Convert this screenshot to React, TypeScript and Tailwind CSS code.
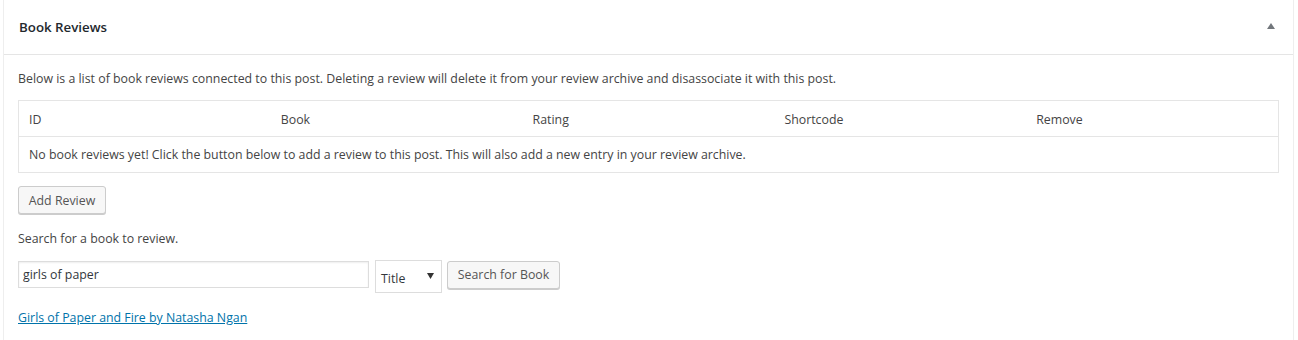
const columns = ["ID", "Book", "Rating", "Shortcode", "Remove"];

export default function App() {
  return (
    <div className="min-h-[340px] bg-white pl-[3px] pr-[4px] font-['Open_Sans',sans-serif] text-[12.35px] text-[#444]">
      <div className="min-h-[340px] border-x border-[#eeeeee]">
        <div className="flex h-[55px] items-center justify-between border-b border-[#e5e5e5] pl-[15px] pr-[18px]">
          <h2 className="pt-[2px] text-[13.3px] font-semibold text-[#23282d]">Book Reviews</h2>
          <svg width="8" height="6" viewBox="0 0 8 6" className="mb-[2px]">
            <polygon points="4,0 8,6 0,6" fill="#72777c" />
          </svg>
        </div>

        <div className="px-[14px]">
          <p className="mt-[13px] h-[20px] pt-[1px] leading-[20px]">
            Below is a list of book reviews connected to this post. Deleting a review will delete it from your review archive and disassociate it with this post.
          </p>

          <div className="mt-[12px] border border-[#e5e5e5]">
            <div className="grid h-[36px] grid-cols-5 items-center border-b border-[#e5e5e5] pt-[3px]">
              {columns.map((col) => (
                <div key={col} className="pl-[10px]">
                  {col}
                </div>
              ))}
            </div>
            <div className="flex h-[35px] items-center pl-[10px] pt-[2px]">
              No book reviews yet! Click the button below to add a review to this post. This will also add a new entry in your review archive.
            </div>
          </div>

          <button className="mt-[13px] h-[28px] w-[88px] rounded-[3px] border border-[#cccccc] bg-[#f7f7f7] pt-[2px] text-[#555] shadow-[0_1px_0_#cccccc]">
            Add Review
          </button>

          <p className="mt-[14px] h-[20px] pt-[1px] leading-[20px]">Search for a book to review.</p>

          <div className="mt-[12px] flex items-start">
            <div className="mt-[1px] flex h-[27px] w-[351px] items-center border border-[#dddddd] pl-[4px] pt-[1px] text-[#32373c] shadow-[inset_0_1px_2px_rgba(0,0,0,0.07)]">
              girls of paper
            </div>
            <div className="ml-[6px] flex h-[33px] w-[67px] items-center justify-between border border-[#dddddd] pl-[5px] pr-[7px] pt-[5px] text-[#32373c]">
              <span>Title</span>
              <svg width="7" height="6" viewBox="0 0 7 6" className="mb-[6px]">
                <polygon points="0,0 7,0 3.5,6" fill="#333" />
              </svg>
            </div>
            <button className="ml-[5px] mt-[1px] h-[28px] w-[113px] rounded-[3px] border border-[#cccccc] bg-[#f7f7f7] pt-[1px] text-[#555] shadow-[0_1px_0_#cccccc]">
              Search for Book
            </button>
          </div>

          <a href="#" className="mt-[15px] block h-[20px] w-fit leading-[20px] text-[#0073aa] underline">
            Girls of Paper and Fire by Natasha Ngan
          </a>
        </div>
      </div>
    </div>
  );
}
